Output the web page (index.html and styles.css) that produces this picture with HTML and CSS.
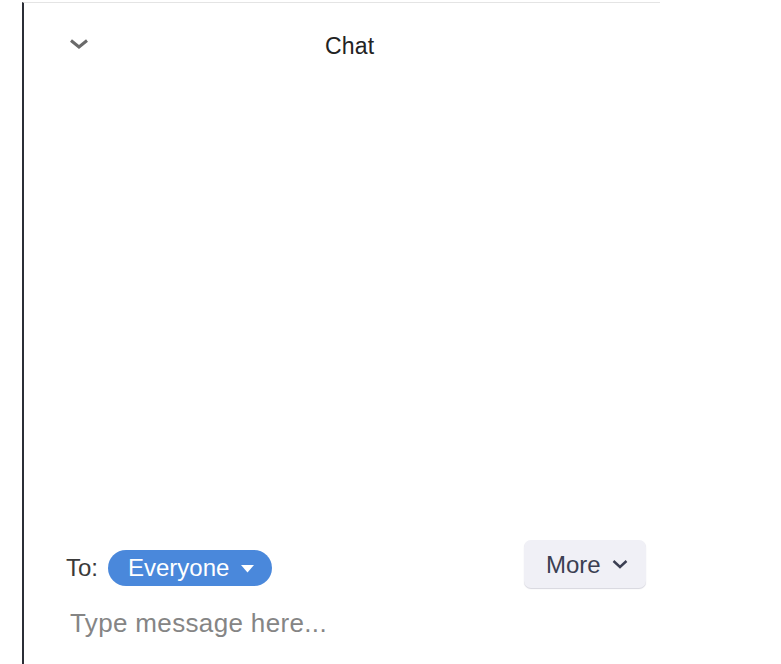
FILE: index.html
```html
<!DOCTYPE html>
<html>
<head>
<meta charset="utf-8">
<link rel="stylesheet" href="styles.css">
</head>
<body>
<div class="panel">
  <div class="header">
    <svg class="collapse" width="20" height="10" viewBox="0 0 20 10"><path d="M2 1.5 L10 8 L18 1.5" fill="none" stroke="#6a6a6a" stroke-width="3"/></svg>
    <div class="title">Chat</div>
  </div>
  <div class="messages"></div>
  <div class="toolbar">
    <span class="to">To:</span>
    <button class="recipient">Everyone<svg class="caret" width="13" height="8" viewBox="0 0 13 8"><path d="M0 0 H13 L6.5 7.5 Z" fill="#fff"/></svg></button>
    <span class="spacer"></span>
    <button class="more">More<svg class="more-chev" width="16" height="10" viewBox="0 0 16 10"><path d="M1.5 2 L8 8 L14.5 2" fill="none" stroke="#3b3f52" stroke-width="2.4"/></svg></button>
  </div>
  <div class="input">Type message here...</div>
</div>
</body>
</html>
```
FILE: styles.css
```css
html, body {
  margin: 0;
  padding: 0;
  background: #fff;
}
body {
  font-family: "Liberation Sans", Arial, sans-serif;
  width: 781px;
  height: 664px;
  overflow: hidden;
}
.panel {
  margin: 2px 0 0 22px;
  width: 638px;
  height: 662px;
  box-sizing: border-box;
  border-left: 2px solid #2b2e36;
  border-top: 1px solid #e4e4e4;
  display: flex;
  flex-direction: column;
}
.header {
  display: flex;
  align-items: center;
  height: 86px;
  padding-left: 45px;
  box-sizing: border-box;
}
.collapse {
  display: block;
  margin-top: -5px;
}
.title {
  margin-left: 236px;
  font-size: 23px;
  color: #222;
  margin-top: 0;
  letter-spacing: 0.2px;
}
.messages {
  flex: 1;
}
.toolbar {
  display: flex;
  align-items: center;
  padding-left: 42px;
  padding-right: 14px;
}
.to {
  font-size: 24px;
  color: #3a3a3a;
  margin-top: 8px;
}
.recipient {
  margin-left: 10px;
  margin-top: 8px;
  height: 36px;
  width: 164px;
  border: none;
  border-radius: 18px;
  background: #4a88db;
  color: #fff;
  font-family: inherit;
  font-size: 24px;
  display: flex;
  align-items: center;
  padding: 0 0 0 20px;
  box-sizing: border-box;
}
.caret {
  margin-left: 12px;
  margin-top: 2px;
}
.spacer {
  flex: 1;
}
.more {
  width: 122px;
  height: 48px;
  border: none;
  border-radius: 7px;
  background: #f0f0f6;
  box-shadow: 0 1px 1px #d6d6de;
  color: #3b3f52;
  font-family: inherit;
  font-size: 24px;
  display: flex;
  align-items: center;
  padding: 2px 0 0 22px;
  box-sizing: border-box;
}
.more-chev {
  margin-left: 11px;
  margin-top: -2px;
}
.input {
  padding-left: 46px;
  margin-top: 20px;
  height: 56px;
  font-size: 26px;
  letter-spacing: 0.35px;
  color: #858585;
}
```
